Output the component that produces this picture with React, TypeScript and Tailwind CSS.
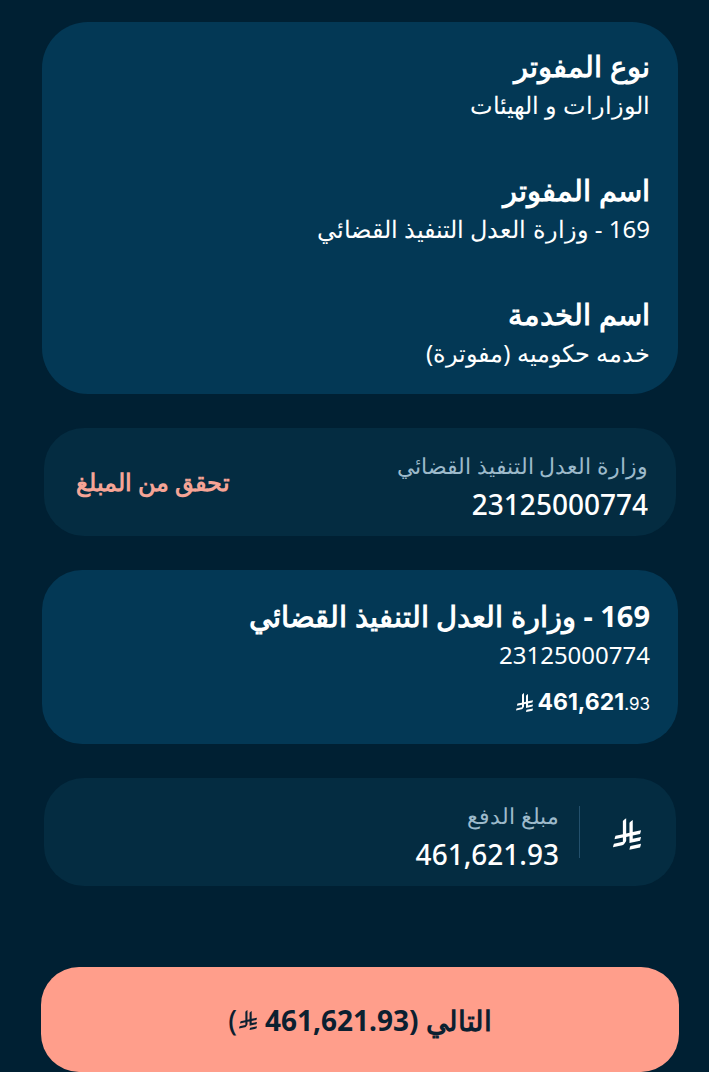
import React from 'react';

const RiyalIcon = ({ className }: { className: string }) => (
  <svg viewBox="0 0 1124.14 1256.39" fill="currentColor" aria-hidden="true" className={className}>
    <path d="M699.62,1113.02h0c-20.06,44.48-33.32,92.75-38.4,143.37l424.51-90.24c20.06-44.47,33.31-92.75,38.4-143.37l-424.51,90.24Z" />
    <path d="M1085.73,895.8c20.06-44.47,33.32-92.75,38.4-143.37l-330.68,70.33v-135.2l292.27-62.11c20.06-44.47,33.32-92.75,38.4-143.37l-330.68,70.27V66.13c-50.67,28.45-95.67,66.32-132.25,110.99v403.35l-132.25,28.11V0c-50.67,28.44-95.67,66.32-132.25,110.99v525.69l-295.91,62.88c-20.06,44.47-33.33,92.75-38.42,143.37l334.33-71.05v170.26l-358.3,76.14c-20.06,44.47-33.32,92.75-38.4,143.37l375.04-79.7c30.53-6.35,56.77-24.4,73.83-49.24l68.78-101.97v-.02c7.14-10.55,11.3-23.27,11.3-36.97v-149.98l132.25-28.11v270.4l424.53-90.28Z" />
  </svg>
);

const App = () => {
  const details = [
    { title: 'نوع المفوتر', value: 'الوزارات و الهيئات' },
    { title: 'اسم المفوتر', value: '169 - وزارة العدل التنفيذ القضائي' },
    { title: 'اسم الخدمة', value: 'خدمه حكوميه (مفوترة)' }
  ];

  return (
    <main
      dir="rtl"
      lang="ar"
      className="min-h-screen bg-[#002033] pt-[22px] pr-[30px] pl-[41px] font-['Noto_Sans',sans-serif] text-white"
    >
      <div className="flex flex-col gap-[34px]">
        <dl className="mx-px flex flex-col gap-[46px] rounded-[46px] bg-[#033855] px-7 pt-6 pb-[22px]">
          {details.map((item) => (
            <div key={item.title}>
              <dt className="text-[29px] leading-10 font-bold">{item.title}</dt>
              <dd className="text-2xl leading-[38px]">{item.value}</dd>
            </div>
          ))}
        </dl>

        <section className="mx-[3px] flex h-[108px] items-center justify-between rounded-[40px] bg-[#042c41] pr-7 pl-8">
          <div className="pt-1.5">
            <label htmlFor="bill-number" className="block text-[22px] leading-[38px] text-[#9dbacb]">
              وزارة العدل التنفيذ القضائي
            </label>
            <input
              id="bill-number"
              inputMode="numeric"
              defaultValue="23125000774"
              className="block w-64 bg-transparent text-[28px] leading-10 font-medium outline-none"
            />
          </div>
          <button type="button" className="text-2xl leading-9 font-bold text-[#f5a496]">
            تحقق من المبلغ
          </button>
        </section>

        <section className="mx-px rounded-[40px] bg-[#033855] px-7 pt-[26px] pb-[22px]">
          <h2 className="text-[29px] leading-10 font-bold">169 - وزارة العدل التنفيذ القضائي</h2>
          <p className="text-2xl leading-[38px]">23125000774</p>
          <p dir="ltr" className="mt-2 flex h-10 items-center justify-end font-['Inter',sans-serif]">
            <RiyalIcon className="mr-1 h-[19px] w-[17px]" />
            <span>
              <span className="text-[23px] font-bold">461,621</span>
              <span className="text-[17px]">.93</span>
            </span>
          </p>
        </section>

        <section className="mx-[3px] flex h-[108px] items-center rounded-[40px] bg-[#042c41] pr-[35px] pl-8">
          <RiyalIcon className="mt-1 h-8 w-7" />
          <div className="mr-[33px] h-[52px] w-px bg-[#23506c]" />
          <div className="mr-5 pt-1.5">
            <label htmlFor="amount" className="block text-[22px] leading-[38px] text-[#9dbacb]">
              مبلغ الدفع
            </label>
            <input
              id="amount"
              inputMode="decimal"
              defaultValue="461,621.93"
              className="block w-64 bg-transparent text-[28px] leading-10 font-medium outline-none"
            />
          </div>
        </section>
      </div>

      <button
        type="button"
        className="mt-[81px] flex h-[105px] w-full items-center justify-center rounded-[38px] bg-[#ff9e8b] text-[28px] font-bold text-[#0b2030]"
      >
        <span>التالي (461,621.93</span>
        <RiyalIcon className="mr-2 ml-0.5 h-5 w-[18px]" />
        <span className="font-medium">)</span>
      </button>
    </main>
  );
};

export default App;
